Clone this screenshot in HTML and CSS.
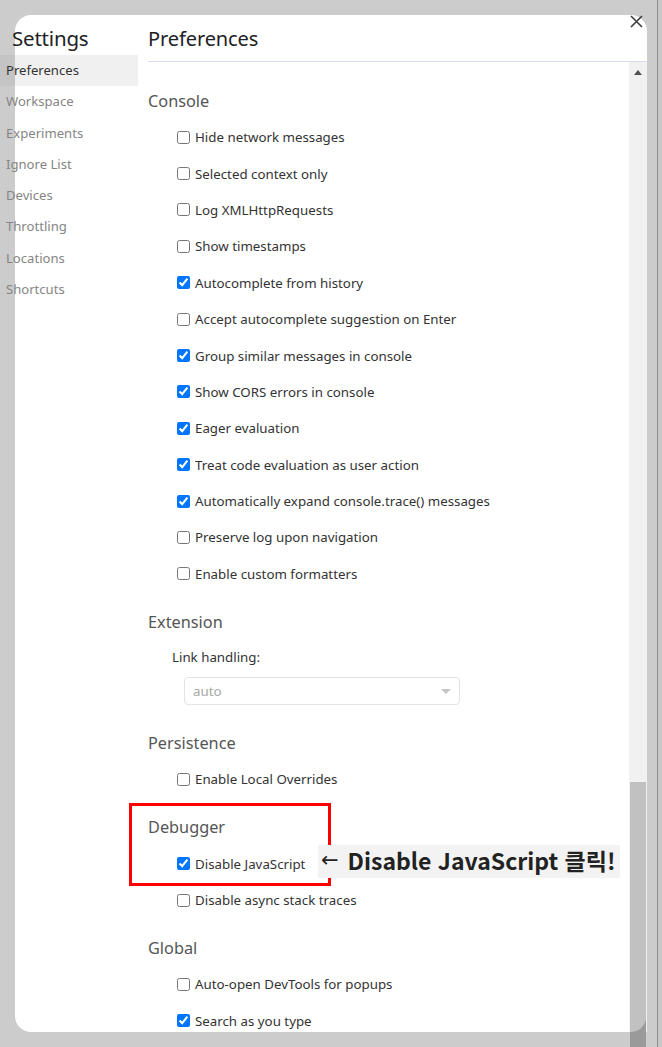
FILE: index.html
```html
<!DOCTYPE html>
<html lang="ko">
<head>
<meta charset="utf-8">
<title>Settings - Preferences</title>
<link rel="stylesheet" href="styles.css">
</head>
<body>
<div class="stage">
  <div class="dialog">
    <button class="close" aria-label="Close">
      <svg width="13" height="13" viewBox="0 0 13 13"><path d="M1 1L12 12M12 1L1 12" stroke="#3c3c3c" stroke-width="1.6" fill="none"/></svg>
    </button>
    <aside class="sidebar">
      <div class="side-title">Settings</div>
      <ul class="side-list">
        <li class="side-item active">Preferences</li>
        <li class="side-item">Workspace</li>
        <li class="side-item">Experiments</li>
        <li class="side-item">Ignore List</li>
        <li class="side-item">Devices</li>
        <li class="side-item">Throttling</li>
        <li class="side-item">Locations</li>
        <li class="side-item">Shortcuts</li>
      </ul>
    </aside>
    <main class="main">
      <header class="main-head"><h1 class="main-title">Preferences</h1></header>
      <div class="body">
        <div class="content">
          <section class="section">
            <h2 class="sec-title">Console</h2>
            <label class="row"><input type="checkbox"><span>Hide network messages</span></label>
            <label class="row"><input type="checkbox"><span>Selected context only</span></label>
            <label class="row"><input type="checkbox"><span>Log XMLHttpRequests</span></label>
            <label class="row"><input type="checkbox"><span>Show timestamps</span></label>
            <label class="row"><input type="checkbox" checked><span>Autocomplete from history</span></label>
            <label class="row"><input type="checkbox"><span>Accept autocomplete suggestion on Enter</span></label>
            <label class="row"><input type="checkbox" checked><span>Group similar messages in console</span></label>
            <label class="row"><input type="checkbox" checked><span>Show CORS errors in console</span></label>
            <label class="row"><input type="checkbox" checked><span>Eager evaluation</span></label>
            <label class="row"><input type="checkbox" checked><span>Treat code evaluation as user action</span></label>
            <label class="row"><input type="checkbox" checked><span>Automatically expand console.trace() messages</span></label>
            <label class="row"><input type="checkbox"><span>Preserve log upon navigation</span></label>
            <label class="row"><input type="checkbox"><span>Enable custom formatters</span></label>
          </section>
          <section class="section">
            <h2 class="sec-title">Extension</h2>
            <div class="field-label">Link handling:</div>
            <div class="select-wrap">
              <div class="select"><span>auto</span><span class="caret"></span></div>
            </div>
          </section>
          <section class="section">
            <h2 class="sec-title">Persistence</h2>
            <label class="row"><input type="checkbox"><span>Enable Local Overrides</span></label>
          </section>
          <section class="section debugger">
            <h2 class="sec-title">Debugger</h2>
            <label class="row"><input type="checkbox" checked><span>Disable JavaScript</span></label>
            <label class="row"><input type="checkbox"><span>Disable async stack traces</span></label>
            <div class="highlight-box"></div>
            <div class="callout"><span class="arrow">←</span>Disable JavaScript 클릭!</div>
          </section>
          <section class="section">
            <h2 class="sec-title">Global</h2>
            <label class="row"><input type="checkbox"><span>Auto-open DevTools for popups</span></label>
            <label class="row"><input type="checkbox" checked><span>Search as you type</span></label>
          </section>
        </div>
        <div class="scrollbar">
          <div class="sb-arrow"></div>
          <div class="sb-space"></div>
          <div class="sb-thumb"></div>
        </div>
      </div>
    </main>
  </div>
  <div class="edge"></div>
</div>
</body>
</html>
```
FILE: styles.css
```css
* { box-sizing: border-box; }
html, body { margin: 0; padding: 0; }
body {
  background: #cccccc;
  width: 662px;
  height: 1047px;
  overflow: hidden;
  font-family: "Noto Sans", "Open Sans", sans-serif;
  color: #303030;
}
.stage {
  display: flex;
  padding: 15px 0 0 15px;
  height: 1047px;
}
.dialog {
  position: relative;
  width: 632px;
  height: 1017px;
  background: #ffffff;
  border-radius: 16px;
  display: flex;
}
.close {
  position: absolute;
  top: -1px;
  right: 4px;
  width: 14px;
  height: 14px;
  padding: 0;
  border: 0;
  background: transparent;
  display: flex;
  align-items: center;
  justify-content: center;
}
.sidebar {
  width: 138px;
  margin-left: -15px;
  flex: 0 0 138px;
}
.side-title {
  height: 40px;
  padding: 9px 0 0 12px;
  font-size: 20.5px;
  line-height: 28px;
  color: #202124;
  letter-spacing: -0.2px;
}
.side-list {
  list-style: none;
  margin: 0;
  padding: 0;
}
.side-item {
  height: 31.3px;
  line-height: 31.3px;
  padding-left: 6px;
  font-size: 13.1px;
  color: #858585;
}
.side-item.active {
  color: #333333;
  background: linear-gradient(to right, #c4c4c4 0, #c4c4c4 15px, #f0f0f0 15px);
}
.main {
  flex: 1;
  display: flex;
  flex-direction: column;
  min-width: 0;
}
.main-head {
  height: 47px;
  margin-left: 10px;
  border-bottom: 1px solid #d5dcef;
}
.main-title {
  margin: 0;
  padding-top: 10px;
  font-size: 20px;
  line-height: 28px;
  font-weight: 400;
  color: #202124;
  letter-spacing: -0.1px;
}
.body {
  flex: 1;
  display: flex;
  min-height: 0;
}
.content {
  flex: 1;
  overflow-x: visible;
  overflow-y: clip;
  padding: 21px 0 0 10px;
}
.section { margin-bottom: 12px; position: relative; }
.sec-title {
  margin: 0;
  height: 36px;
  line-height: 36px;
  font-size: 16.3px;
  font-weight: 400;
  color: #555555;
}
.row {
  display: flex;
  align-items: center;
  height: 36.4px;
  padding-left: 29px;
  gap: 5px;
  font-size: 13.3px;
  color: #333333;
}
.row input {
  margin: 0;
  width: 13px;
  height: 13px;
  flex: 0 0 13px;
}
.field-label {
  height: 34px;
  line-height: 34px;
  padding-left: 24px;
  font-size: 13.3px;
  color: #333333;
}
.select-wrap {
  height: 39px;
  padding: 3px 0 0 36px;
}
.select {
  width: 276px;
  height: 28px;
  border: 1px solid #e3e3e3;
  border-radius: 4px;
  display: flex;
  align-items: center;
  justify-content: space-between;
  padding: 0 8px 0 8px;
  font-size: 13.3px;
  color: #a8a8a8;
}
.caret {
  width: 0;
  height: 0;
  border-left: 5px solid transparent;
  border-right: 5px solid transparent;
  border-top: 5px solid #c4c4c4;
}
.highlight-box {
  position: absolute;
  left: -19px;
  top: -6px;
  width: 202px;
  height: 83px;
  border: 3px solid #ff0000;
}
.callout {
  position: absolute;
  left: 170px;
  top: 36px;
  width: 302px;
  height: 33px;
  background: #f3f3f3;
  display: flex;
  align-items: center;
  font-family: "Noto Sans CJK KR", "Noto Sans", sans-serif;
  font-weight: 700;
  font-size: 23px;
  line-height: 33px;
  color: #222222;
  padding: 0 0 2px 3px;
  white-space: nowrap;
}
.callout .arrow {
  font-family: "DejaVu Sans", sans-serif;
  font-weight: 400;
  font-size: 21px;
  margin-right: 9px;
}
.scrollbar {
  position: relative;
  flex: 0 0 18px;
  background: #f1f1f1;
  display: flex;
  flex-direction: column;
}
.sb-arrow {
  height: 20px;
  display: flex;
  justify-content: center;
  padding-top: 8px;
}
.sb-arrow::before {
  content: "";
  width: 0;
  height: 0;
  border-left: 4.5px solid transparent;
  border-right: 4.5px solid transparent;
  border-bottom: 5px solid #505050;
}
.sb-space { flex: 1; }
.sb-thumb {
  flex: 0 0 250px;
  margin: 0 1px;
  background: #9a9a9a;
}
.sb-thumb::before {
  content: "";
  display: block;
  height: 100%;
  background: #c1c1c1;
  border-bottom-right-radius: 15px;
}
.scrollbar::after {
  content: "";
  position: absolute;
  top: 100%;
  left: 1px;
  right: 1px;
  height: 15px;
  background: #9a9a9a;
}
.edge {
  width: 15px;
  margin-top: -15px;
  height: 1047px;
  border-right: 4px solid #c8c8c8;
  box-shadow: inset -1px 0 0 #8c8c8c;
}
```
